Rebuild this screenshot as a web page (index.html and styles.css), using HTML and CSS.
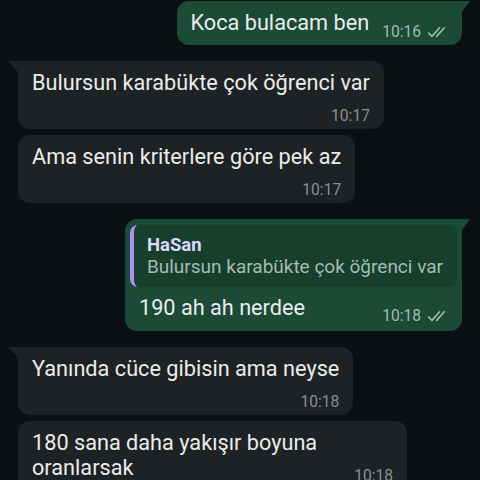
FILE: index.html
```html
<!DOCTYPE html>
<html lang="tr">
<head>
    <meta charset="UTF-8">
    <meta name="viewport" content="width=device-width, initial-scale=1.0">
    <title>Sohbet</title>
    <link rel="stylesheet" href="styles.css">
</head>
<body>
    <section class="chat">
        <div class="msg out tail first">
            <span class="meta inline">10:16 <svg class="ticks" viewBox="0 0 20 12"><path d="M1.5 6.5l3.2 3.2 7.3-8.2"/><path d="M9.2 9.7l7.3-8.2"/></svg></span>
            <span class="text">Koca bulacam ben</span>
        </div>

        <div class="msg in tail first">
            <div class="text">Bulursun karabükte çok öğrenci var</div>
            <div class="meta">10:17</div>
        </div>
        <div class="msg in grouped">
            <div class="text">Ama senin kriterlere göre pek az</div>
            <div class="meta">10:17</div>
        </div>

        <div class="msg out tail first reply">
            <div class="quote">
                <div class="quote-name">HaSan</div>
                <div class="quote-text">Bulursun karabükte çok öğrenci var</div>
            </div>
            <div class="body">
                <span class="meta inline">10:18 <svg class="ticks" viewBox="0 0 20 12"><path d="M1.5 6.5l3.2 3.2 7.3-8.2"/><path d="M9.2 9.7l7.3-8.2"/></svg></span>
                <span class="text">190 ah ah nerdee</span>
            </div>
        </div>

        <div class="msg in tail first">
            <div class="text">Yanında cüce gibisin ama neyse</div>
            <div class="meta">10:18</div>
        </div>
        <div class="msg in grouped">
            <span class="text">180 sana daha yakışır boyuna oranlarsak</span>
            <span class="meta inline late">10:18</span>
        </div>
    </section>
</body>
</html>
```

FILE: styles.css
```css
body {
    margin: 0;
    padding: 0;
    background-color: #0b1014;
    font-family: Roboto, "Noto Sans", Arial, sans-serif;
    color: #e9edeb;
    overflow: hidden;
}

.chat {
    display: flex;
    flex-direction: column;
    padding: 1px 18px 0 18px;
}

.msg {
    position: relative;
    display: flow-root;
    max-width: 361px;
    padding: 9px 14px 4px 14px;
    border-radius: 12px;
    font-size: 21.7px;
    line-height: 25px;
}

.msg.first {
    margin-top: 16px;
}

.chat .msg:first-child {
    margin-top: 0;
}

.msg.grouped {
    margin-top: 6px;
}

.msg.in {
    align-self: flex-start;
    background-color: #1f2224;
}

.msg.out {
    align-self: flex-end;
    background-color: #1b4a37;
}

/* little triangle on the first bubble of a group */
.msg.tail::before {
    content: "";
    position: absolute;
    top: 0;
    width: 10px;
    height: 11px;
}

.msg.in.tail {
    border-top-left-radius: 0;
}

.msg.in.tail::before {
    left: -10px;
    background-color: #1f2224;
    clip-path: polygon(0 0, 100% 0, 100% 100%);
}

.msg.out.tail {
    border-top-right-radius: 0;
}

.msg.out.tail::before {
    right: -8px;
    width: 8px;
    background-color: #1b4a37;
    clip-path: polygon(0 0, 100% 0, 0 100%);
}

.meta {
    display: block;
    margin-top: 12px;
    font-size: 15.6px;
    line-height: 18px;
    text-align: right;
    color: #8b8f91;
}

.meta.inline {
    float: right;
    display: flex;
    align-items: center;
    gap: 6px;
    margin-left: 13px;
}

.msg.in .meta.late {
    margin-top: 12px;
}

.msg.out .meta {
    color: #a3bdb0;
}

.ticks {
    width: 21px;
    height: 13px;
    fill: none;
    stroke: #a3bdb0;
    stroke-width: 1.5;
    stroke-linecap: round;
    stroke-linejoin: round;
}

.msg.out .meta.inline {
    margin-top: 13px;
}

/* reply bubble */
.msg.reply {
    padding: 6px 5px 6px 5px;
    max-width: none;
}

.quote {
    padding: 9px 14px 9px 13px;
    border-left: 4px solid #a494ef;
    border-radius: 8px;
    background-color: #163f2e;
}

.quote-name {
    font-size: 18.5px;
    line-height: 22px;
    font-weight: bold;
    color: #ddd8f7;
}

.quote-text {
    font-size: 19px;
    line-height: 22px;
    color: #a5bcb0;
}

.msg.reply .body {
    display: flow-root;
    margin-top: 8px;
    padding: 0 9px;
}

.msg.reply .meta.inline {
    margin-top: 12px;
}
```
